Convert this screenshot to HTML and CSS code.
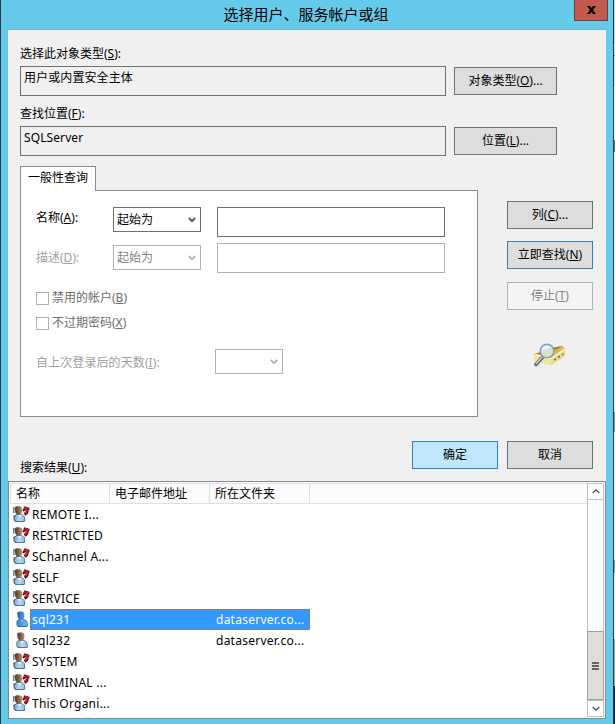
FILE: index.html
```
<!DOCTYPE html>
<html lang="zh-CN">
<head>
    <meta charset="utf-8">
    <title>选择用户、服务帐户或组</title>
    <link rel="stylesheet" href="styles.css">
</head>
<body>
    <svg class="defs" width="0" height="0">
        <defs>
            <linearGradient id="hair" x1="0" x2="1">
                <stop offset="0" stop-color="#3c3c3c"/>
                <stop offset=".4" stop-color="#6d5640"/>
                <stop offset="1" stop-color="#c48f60"/>
            </linearGradient>
            <linearGradient id="shirt" x1="0" x2="1">
                <stop offset="0" stop-color="#7fb0dc"/>
                <stop offset=".5" stop-color="#b9d8f3"/>
                <stop offset="1" stop-color="#8fb9e0"/>
            </linearGradient>
            <linearGradient id="blueHead" x1="0" x2="1">
                <stop offset="0" stop-color="#23609f"/>
                <stop offset="1" stop-color="#5a9ade"/>
            </linearGradient>
            <linearGradient id="blueShirt" x1="0" x2="1">
                <stop offset="0" stop-color="#3f87cf"/>
                <stop offset="1" stop-color="#70b2f5"/>
            </linearGradient>
        </defs>
        <symbol id="person" viewBox="0 0 12 17">
            <path d="M.5 10 3 8h5l3 2 1 4-1 2H2L.5 14z" fill="#3c5873"/>
            <path d="M1.200 10.500 3.500 8.500h4.500l2.500 2 .8 3.500-.8 1.300H2.500L1.200 13.500z" fill="url(#shirt)"/>
            <path d="M1 2.200 2.500.5h4L8.300 2v4.500L6.500 9h-2L2 7z" fill="url(#hair)"/>
            <path d="M4.500 9h3L6.500 11.500z" fill="#f5fafd"/>
        </symbol>
        <symbol id="person-on" viewBox="0 0 12 17">
            <path d="M.5 10 3 8h5l3 2 1 4-1 2H2L.5 14z" fill="#23609f"/>
            <path d="M1.200 10.500 3.500 8.500h4.500l2.500 2 .8 3.500-.8 1.300H2.500L1.200 13.500z" fill="url(#blueShirt)"/>
            <path d="M1 2.200 2.500.5h4L8.300 2v4.500L6.500 9h-2L2 7z" fill="url(#blueHead)"/>
            <path d="M4.500 9h3L6.500 11.500z" fill="#85c1fb"/>
        </symbol>
        <symbol id="group" viewBox="0 0 17 17">
            <path d="M0 1h1.500v6H0zM0 10l2-1v6H1z" fill="#7c858d"/>
            <path d="M.8 10.500 3.500 8h5l3 2.200.8 3.800-1 2H2.500L.8 14z" fill="#3c5873"/>
            <path d="M1.700 10.800 4 8.500h4.500l2.500 2 .6 3.500-.8 1.300H3L1.700 13.500z" fill="url(#shirt)"/>
            <path d="M1.500 2 3 .3h4L9 2v4.500L7 9H5L2.500 7z" fill="url(#hair)"/>
            <path d="M5 9h3L7 11.500z" fill="#f5fafd"/>
            <path d="M11.500 8.300c3-1.500 3.300-3.300 1.800-6" fill="none" stroke="#3a1014" stroke-width="3"/>
            <path d="M9.300 4.800 11.500.3 16.700 2 16 4.500l-3-1-2.200 2z" fill="#3a1014"/>
            <path d="M11.800 7.600c2.300-1.200 2.600-3 1.500-5" fill="none" stroke="#ee1f2b" stroke-width="1.700"/>
            <path d="M10.200 4 12 1l4 1.500-.5 1-2.700-.9z" fill="#ee1f2b"/>
        </symbol>
        <symbol id="chevron" viewBox="0 0 8 6">
            <path d="M.8 1 4 4.200 7.200 1" fill="none" stroke="currentColor" stroke-width="2"/>
        </symbol>
        <symbol id="arrow" viewBox="0 0 8 5">
            <path d="M.6 4 4 .9 7.400 4" fill="none" stroke="currentColor" stroke-width="1.500"/>
        </symbol>
    </svg>

    <div class="window">
        <div class="titlebar">
            <span class="title">选择用户、服务帐户或组</span>
            <button class="close" aria-label="关闭">
                <svg width="9" height="8" viewBox="0 0 9 8"><path d="M0 0h3l1.500 2L6 0h3L6 4l3 4H6L4.500 6 3 8H0l3-4z"/></svg>
            </button>
        </div>

        <div class="client">
            <div class="form">
                <div class="label">选择此对象类型(<u>S</u>):</div>
                <div class="row">
                    <div class="readonly">用户或内置安全主体</div>
                    <button class="btn wide">对象类型(<u>O</u>)...</button>
                </div>
                <div class="label second">查找位置(<u>F</u>):</div>
                <div class="row">
                    <div class="readonly">SQLServer</div>
                    <button class="btn wide">位置(<u>L</u>)...</button>
                </div>

                <div class="query">
                    <div class="tabs">
                        <div class="tab">一般性查询</div>
                        <div class="panel">
                            <div class="field">
                                <label>名称(<u>A</u>):</label>
                                <div class="select">起始为<svg width="8" height="6"><use href="#chevron"/></svg></div>
                                <input type="text">
                            </div>
                            <div class="field disabled">
                                <label>描述(<u>D</u>):</label>
                                <div class="select">起始为<svg width="8" height="6"><use href="#chevron"/></svg></div>
                                <input type="text" disabled>
                            </div>
                            <div class="check first"><span class="box"></span>禁用的帐户(<u>B</u>)</div>
                            <div class="check"><span class="box"></span>不过期密码(<u>X</u>)</div>
                            <div class="field disabled days">
                                <label>自上次登录后的天数(<u>I</u>):</label>
                                <div class="select short"><svg width="8" height="6"><use href="#chevron"/></svg></div>
                            </div>
                        </div>
                    </div>
                    <div class="side">
                        <button class="btn">列(<u>C</u>)...</button>
                        <button class="btn default">立即查找(<u>N</u>)</button>
                        <button class="btn" disabled>停止(<u>T</u>)</button>
                        <svg class="search-icon" width="32" height="24" viewBox="0 0 32 24">
                            <path d="M0 11 18 5l11-2 2 4v6l-14 9L9 20 0 18z" fill="#d3c06a"/>
                            <path d="M1 11 18 5l10-2-14 11z" fill="#9b7a22"/>
                            <path d="M17 8 29 3.500l-9 6z" fill="#e6ae22"/>
                            <path d="M0 12 17 16v6L9 20 0 18z" fill="#f1e79f"/>
                            <path d="M17 16 31 7v6l-14 9z" fill="#e8dc8e"/>
                            <path d="M0 12 3 11l14 4L30 6l1 1-14 9.500z" fill="#fffad2"/>
                            <path d="m20 17 2-1.200m2-1.300 2-1.300m2-1.300 1.500-1" stroke="#786d3b" stroke-width="1.500"/>
                            <path d="M9 13.500 2 21.500" stroke="#62676d" stroke-width="3.600" stroke-linecap="round"/>
                            <path d="M8.500 13.500 2 21" stroke="#c9ced3" stroke-width="1.500"/>
                            <circle cx="13" cy="8" r="6.800" fill="#cfe5f5" stroke="#8c9cad" stroke-width="1.500"/>
                            <path d="M7 9.500 19 6.500v3L16 13l-6 .5z" fill="#dce0bb"/>
                            <path d="M8 7c1-4 6-5 9-2-3-.5-6 0-9 2z" fill="#f7fcff"/>
                        </svg>
                    </div>
                </div>

                <div class="actions">
                    <button class="btn primary">确定</button>
                    <button class="btn">取消</button>
                </div>
                <div class="label results-label">搜索结果(<u>U</u>):</div>
            </div>

            <div class="results">
                <div class="list">
                    <div class="head"><span>名称</span><span>电子邮件地址</span><span>所在文件夹</span></div>
                    <div class="item"><svg class="group" width="17" height="17"><use href="#group"/></svg><div class="cells"><span>REMOTE I...</span></div></div>
                    <div class="item"><svg class="group" width="17" height="17"><use href="#group"/></svg><div class="cells"><span>RESTRICTED</span></div></div>
                    <div class="item"><svg class="group" width="17" height="17"><use href="#group"/></svg><div class="cells"><span>SChannel A...</span></div></div>
                    <div class="item"><svg class="group" width="17" height="17"><use href="#group"/></svg><div class="cells"><span>SELF</span></div></div>
                    <div class="item"><svg class="group" width="17" height="17"><use href="#group"/></svg><div class="cells"><span>SERVICE</span></div></div>
                    <div class="item selected"><svg class="person" width="12" height="17"><use href="#person-on"/></svg><div class="cells"><span>sql231</span><span class="folder">dataserver.co...</span></div></div>
                    <div class="item"><svg class="person" width="12" height="17"><use href="#person"/></svg><div class="cells"><span>sql232</span><span class="folder">dataserver.co...</span></div></div>
                    <div class="item"><svg class="group" width="17" height="17"><use href="#group"/></svg><div class="cells"><span>SYSTEM</span></div></div>
                    <div class="item"><svg class="group" width="17" height="17"><use href="#group"/></svg><div class="cells"><span>TERMINAL ...</span></div></div>
                    <div class="item"><svg class="group" width="17" height="17"><use href="#group"/></svg><div class="cells"><span>This Organi...</span></div></div>
                </div>
                <div class="scrollbar">
                    <div class="scroll-btn"><svg width="8" height="5"><use href="#arrow"/></svg></div>
                    <div class="track"></div>
                    <div class="thumb"><i></i><i></i><i></i></div>
                    <div class="scroll-btn down"><svg width="8" height="5"><use href="#arrow"/></svg></div>
                </div>
            </div>
        </div>
    </div>
    <div class="desktop"></div>
</body>
</html>
```
FILE: styles.css
```
* {
    box-sizing: border-box;
}

body {
    margin: 0;
    width: 615px;
    height: 724px;
    overflow: hidden;
    display: flex;
    font-family: "Noto Sans", "Noto Sans CJK SC", sans-serif;
    font-size: 12px;
    line-height: 16px;
    color: #000;
}

.defs {
    position: absolute;
}

.window {
    width: 614px;
    height: 724px;
    padding: 0 7px;
    background: #66cbea;
    border: 1px solid #2b3742;
    border-width: 0 1px;
}

/* whatever is behind the dialog */
.desktop {
    width: 1px;
    background: linear-gradient(#cfd3d6 0 44px, #e8e8e8 44px 55px, #777 55px 56px, #ddd 56px 87px, #fff 87px 140px, #777 140px 152px, #f4f4f4 152px 412px, #999 412px 432px, #f4f4f4 432px 560px, #999 560px 573px, #f4f4f4 573px 639px, #aaa 639px 686px, #182033 686px);
}

.titlebar {
    position: relative;
    height: 29px;
    text-align: center;
}

.title {
    display: block;
    padding: 3px 2px 0 0;
    font-size: 15px;
    line-height: 22px;
}

.close {
    position: absolute;
    top: -1px;
    right: -2px;
    display: flex;
    justify-content: center;
    width: 34px;
    height: 22px;
    padding: 6px 0 0;
    background: #c35a50;
    border: 1px solid #713a3b;
}

.client {
    height: 690px;
    background: #f0f0f0;
    border-top: 1px solid #79b4c8;
}

.form {
    height: 451px;
    padding: 16px 13px 0 12px;
}

.label {
    height: 16px;
}

.label.second {
    margin-top: 9px;
    margin-bottom: 1px;
    padding-top: 1px;
}

u {
    text-underline-offset: 1px;
}

.row {
    display: flex;
    align-items: center;
    gap: 8px;
    margin-top: 4px;
}

.label.second + .row {
    margin-top: 5px;
}

.readonly {
    width: 426px;
    height: 30px;
    padding: 3px;
    border: 1px solid #707073;
    letter-spacing: .1px;
}

.btn {
    width: 86px;
    height: 28px;
    padding: 0 0 1px;
    font: inherit;
    color: #000;
    background: #ddd;
    border: 1px solid #707070;
}

.btn.wide {
    width: 103px;
}

.btn.default {
    border-color: #3c7fb1;
}

.btn.primary {
    background: #bee6fd;
    border-color: #3c7fb1;
}

.btn:disabled {
    color: #838383;
    background: #f4f4f4;
    border-color: #adb2b5;
}

.query {
    display: flex;
    justify-content: space-between;
    margin-top: 10px;
}

.tabs {
    width: 458px;
}

.tab {
    position: relative;
    width: 76px;
    height: 25px;
    margin-bottom: -1px;
    padding: 3px 7px;
    background: #fff;
    border: 1px solid #898c95;
    border-bottom: 0;
    white-space: nowrap;
}

.panel {
    height: 227px;
    padding: 16px 15px 0;
    background: #fff;
    border: 1px solid #898c95;
}

.field {
    display: flex;
    height: 30px;
}

.field + .field {
    margin-top: 6px;
}

.field label {
    width: 77px;
    padding-top: 3px;
    white-space: nowrap;
}

.select {
    display: flex;
    align-items: center;
    justify-content: space-between;
    width: 88px;
    height: 25px;
    padding: 0 4px 0 3px;
    border: 1px solid #707070;
    color: #000;
}

.select svg {
    color: #555;
}

.field input {
    width: 228px;
    height: 30px;
    margin: 0 0 0 16px;
    padding: 0 3px;
    background: #fff;
    border: 1px solid #707070;
}

.disabled label {
    padding-top: 7px;
    color: #a0a0a0;
}

.disabled .select {
    margin-top: 2px;
    color: #838383;
    border-color: #adb2b5;
}

.disabled .select svg {
    color: #b5b5b5;
}

.disabled input {
    border-color: #adb2b5;
}

.check {
    display: flex;
    align-items: center;
    height: 16px;
    margin-top: 9px;
    color: #6d6d6d;
}

.check.first {
    margin-top: 17px;
}

.box {
    width: 13px;
    height: 13px;
    margin-right: 3px;
    border: 1px solid #adb2b5;
}

.field.days {
    margin-top: 17px;
}

.days label {
    width: 179px;
    padding-top: 7px;
    letter-spacing: .1px;
}

.days .select {
    margin-top: 1px;
}

.select.short {
    width: 68px;
    justify-content: flex-end;
}

.side {
    display: flex;
    flex-direction: column;
    width: 86px;
    padding-top: 35px;
}

.side .btn + .btn {
    margin-top: 12px;
}

.side .btn:disabled {
    margin-top: 13px;
}

.search-icon {
    margin: 33px 0 0 27px;
}

.actions {
    display: flex;
    justify-content: flex-end;
    gap: 9px;
    margin-top: 24px;
}

.results-label {
    margin-top: -9px;
}

.results {
    display: flex;
    height: 238px;
    padding: 1px;
    background: #fff;
    border: 1px solid #828790;
}

.list {
    flex: 1;
    overflow: hidden;
}

.head {
    display: flex;
    height: 21px;
    background: #fcfcfc;
    border: 1px solid #dedfe1;
    border-width: 1px 0 1px 1px;
}

.head span {
    width: 100px;
    padding-left: 5px;
    line-height: 20px;
    border-right: 1px solid #dedfe1;
}

.head span:first-child {
    width: 99px;
}

.item {
    display: flex;
    height: 21px;
    padding-left: 3px;
}

.item svg {
    flex: none;
    margin-top: 2px;
}

.item .person {
    margin: 2px 2px 0 3px;
}

.cells {
    display: flex;
    width: 280px;
    height: 21px;
    padding-left: 2px;
    line-height: 22px;
    letter-spacing: .25px;
    white-space: nowrap;
}

.cells span:first-child {
    width: 184px;
}

.selected .cells {
    padding-left: 1px;
    line-height: 20px;
    color: #fff;
    background: #3399ff;
    border: 1px dotted #cc6600;
}

.scrollbar {
    display: flex;
    flex-direction: column;
    width: 17px;
    color: #606060;
}

.scroll-btn {
    display: flex;
    align-items: center;
    justify-content: center;
    height: 17px;
    background: #fff;
    border: 1px solid #bfbfbf;
}

.scroll-btn.down svg {
    transform: rotate(180deg);
}

.track {
    flex: 1;
    border: 1px solid #bfbfbf;
    border-width: 0 1px;
}

.thumb {
    display: flex;
    flex-direction: column;
    align-items: center;
    justify-content: center;
    gap: 1px;
    height: 69px;
    background: #ddd;
    border: 1px solid #a0a0a0;
}

.thumb i {
    width: 7px;
    height: 2px;
    background: #666;
}
```
